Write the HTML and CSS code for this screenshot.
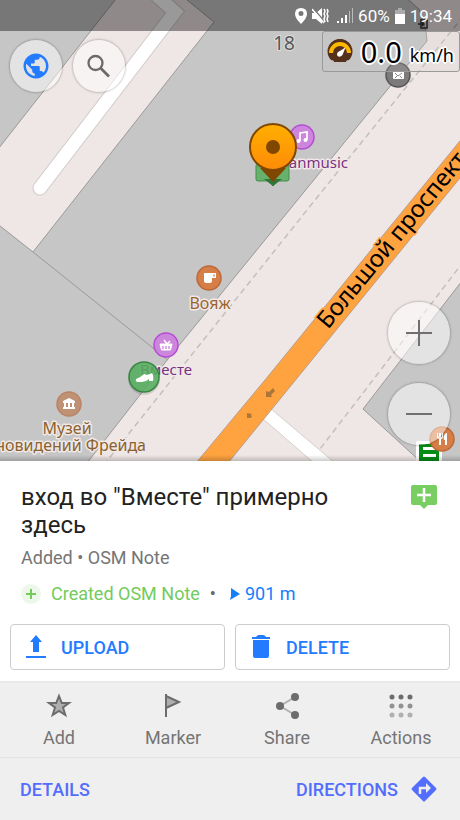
FILE: index.html
```html
<!DOCTYPE html>
<html lang="en">
<head>
<meta charset="utf-8">
<meta name="viewport" content="width=device-width, initial-scale=1">
<title>Map</title>
<link rel="stylesheet" href="styles.css">
</head>
<body>
<main class="app">
  <section class="map">
    <svg class="map-canvas" viewBox="0 0 460 461" preserveAspectRatio="xMinYMin slice" role="img" aria-label="Map">
      <rect class="land" width="460" height="461"/>
      <!-- buildings -->
      <g class="building">
        <path d="M-5-5H403L419 9L426 31L427 41L168 359L87 463H-5Z"/>
        <path d="M465 277L363 409L422 463H465Z"/>
        <path class="yard" d="M119-5L-5 153V222L33 252L214 22L181-5Z"/>
        <path d="M33 252L168 360"/>
      </g>
      <path class="path-edge" d="M470 8L315 200L107 461"/>
      <path class="path-edge" d="M470 253L373 380L320 449"/>
      <!-- service roads -->
      <path class="casing" d="M40 188L175 12L158-3"/>
      <path class="service" d="M40 188L175 12L158-3"/>
      <path class="side-road" d="M270 408L335 463H314L262 418Z"/>
      <!-- avenue -->
      <path class="avenue" d="M464 136V173L228 463H196L265 380Z"/>
      <g fill="#ac763a"><path d="M273 388l-4 4-3-1-0 6h6l-1-2 4-4z"/><path d="M247 413l5 1-1 1 1 2-2 1-3 0z"/><path d="M408 216l6 1-2 5z"/><path d="M340 301l4 2-3 3z"/></g>
      <text class="street" transform="translate(328 330) rotate(-50.6)">Большой проспект</text>
      <text class="house" x="284" y="50">18</text>

      <!-- transit sign -->
      <rect x="416" y="441" width="26" height="25" rx="2" fill="#fff"/>
      <path d="M419 444h20v20h-20z" fill="#078c17"/><path d="M423 447h13v3h-13zm0 7h13v3h-13z" fill="#fff"/>
      <path d="M421 20h6v8h-6z" fill="none" stroke="#333" stroke-width="1.5"/><path d="M418 24h6m-2-2 2 2-2 2" stroke="#333" fill="none" stroke-width="1.5"/>

      <g transform="translate(398 75)"><circle r="12" fill="#7c7a7b" stroke="#555" stroke-width="1.5"/><rect x="-5" y="-4" width="11" height="8" rx="1" fill="#fff"/><path d="M-3-2L0 1L4-2M-3 3L-1 1M4 3L2 1" fill="none" stroke="#888"/></g>
      <g transform="translate(302 137)"><circle class="shop" r="12"/><path d="M-2 4V-4L5-5V3" fill="none" stroke="#fff" stroke-width="1.7"/><circle cx="-3.500" cy="4" r="2" fill="#fff"/><circle cx="3.500" cy="3" r="2" fill="#fff"/></g>
      <text class="label shop-label" x="348" y="168" text-anchor="end">Romanmusic</text>
      <g transform="translate(209 278)"><circle class="food" r="12"/><path d="M-5-5H7V0H3V3Q3 5 1 5H-3Q-5 5-5 3Z" fill="#fff"/><path d="M5-3.500v2" stroke="#d37d45" stroke-width="1.3"/></g>
      <text class="label food-label" x="210" y="309">Вояж</text>
      <g transform="translate(166 345)"><circle class="shop" r="12"/><path d="M-6-1H6L4.500 5H-4.500Z" fill="#fff" stroke="#fff" stroke-linejoin="round"/><path d="M-2-5L1-1M4-4L1-1" stroke="#fff" stroke-width="1.500"/><path d="M-3 1v3M0 1v3M3 1v3" stroke="#c880da" stroke-width="1.3"/></g>
      <text class="label shop-label" x="166" y="375">Вместе</text>
      <g transform="translate(69 404)"><circle r="12" fill="#bf9275" stroke="#b98566" stroke-width="1.500"/><path d="M-6-3L0-6L6-3V-1H-6ZM-5-1h2v5h-2zM-1-1H1V4H-1zM3-1h2v5h-2zM-6 3H6V5H-6Z" fill="#fff"/></g>
      <text class="label museum-label" x="67" y="434">Музей</text>
      <text class="label museum-label" x="146" y="451" text-anchor="end">Сновидений Фрейда</text>
      <g transform="translate(442 439)"><circle class="food" r="12"/><path d="M-5-6V-2Q-5 0-3 0V6H-1V0Q1 0 1-2V-6H0V-2H-1V-6H-3V-2H-4V-6ZM4-6Q1-4 2 1H3V6H5V-6Z" fill="#fff"/></g>

      <circle cx="144" cy="379" r="16" fill="#000" opacity=".12"/>
      <circle cx="144" cy="377" r="15" fill="#56b05f" fill-opacity=".85" stroke="#398542" stroke-width="1.5"/>
      <path d="M136 379Q140 378 144 374Q148 376 152 373Q154 376 153 381H149V379Q146 382 142 382H137Q135 381 136 379Z" fill="#fff"/>
      <path d="M258 164h29q2 0 2 2v13q0 2-2 2h-9l-5 5-5-5h-10q-2 0-2-2v-13q0-2 2-2z" fill="#5daf63" fill-opacity=".92" stroke="#438d49"/>
      <path d="M264 179l9 7 9-7z" fill="#317539"/>
      <defs><linearGradient id="pin" x2="0" y2="1"><stop stop-color="#ffaf00"/><stop offset="1" stop-color="#ff8b08"/></linearGradient></defs>
      <path d="M260 168L273 182L286 168Z" fill="#804700"/>
      <circle cx="273" cy="147" r="23" fill="url(#pin)" stroke="#804700" stroke-width="2"/><circle cx="273" cy="147" r="7" fill="#804700"/>
    </svg>

    <header class="status">
      <svg width="12" height="16" viewBox="0 0 12 16"><path fill="#fff" fill-rule="evenodd" d="M6 0Q0 0 0 6Q0 10 6 16Q12 10 12 6Q12 0 6 0ZM6 3A2.500 2.500 0 1 1 6 8A2.500 2.500 0 0 1 6 3Z"/></svg>
      <svg width="17" height="16" viewBox="0 0 17 16" fill="none" stroke="#fff"><path d="M0 5h4l6-5v16l-6-5H0z" fill="#fff" stroke="none"/><path d="M1 0L13 14" stroke="#777" stroke-width="1.500"/><path d="M0 1L12 15" stroke-width="1.500"/><path d="M12 1l1 2-1 3 1 2-1 3 1 3M15 1l1 2-1 3 1 2-1 3 1 3" stroke-width="1.500"/></svg>
      <svg class="signal" width="16" height="16" viewBox="0 0 16 16" fill="#fff"><path d="M0 13h2v2H0zM4 10h2v5H4zM8 7h2v8H8z"/><path d="M12 3h1v12h-1zM15 0h1v15h-1z" opacity=".5"/></svg>
      <span>60%</span>
      <svg width="10" height="16" viewBox="0 0 10 16"><path d="M3 0h4v2h3v14H0V2h3z" fill="#ababab"/><path d="M0 6h10v10H0z" fill="#fff"/></svg>
      <time>19:34</time>
    </header>

    <div class="speed">
      <svg width="26" height="26" viewBox="0 0 26 26"><path d="M7 23Q7 21 4 21A12.500 12.500 0 1 1 22 21Q19 21 19 23Z" fill="#55301b"/><path d="M4 14A9 9 0 0 1 22 14" fill="none" stroke="#fdb900" stroke-width="4"/><path d="M18.500 8.500L15.500 16Q13 19 10.500 17Q9 14 12 12.500Z" fill="#fff"/></svg>
      <span class="speed-value">0.0</span><span class="speed-unit">km/h</span>
    </div>

    <div class="top-controls">
      <button class="round" type="button" aria-label="Configure map"><svg width="30" height="30" viewBox="0 0 24 24"><path fill="#237bff" d="M12 2C6.480 2 2 6.480 2 12s4.480 10 10 10 10-4.480 10-10S17.520 2 12 2zm-1 17.930c-3.950-.49-7-3.850-7-7.930 0-.62.080-1.210.21-1.790L9 15v1c0 1.100.9 2 2 2v1.930zm6.900-2.540c-.26-.81-1-1.390-1.900-1.390h-1v-3c0-.55-.45-1-1-1H8v-2h2c.55 0 1-.45 1-1V7h2c1.100 0 2-.9 2-2v-.41c2.930 1.190 5 4.060 5 7.410 0 2.080-.8 3.970-2.100 5.390z"/></svg></button>
      <button class="round" type="button" aria-label="Search"><svg width="30" height="30" viewBox="0 0 30 30" fill="none" stroke="#6b6b6b"><circle cx="11.500" cy="12" r="7" stroke-width="2.300"/><path d="M16.500 17L25 25.500" stroke-width="2.800"/></svg></button>
    </div>
    <div class="zoom-controls">
      <button class="round large" type="button" aria-label="Zoom in"><svg width="26" height="26" viewBox="0 0 26 26"><path d="M0 13H26M13 0V26" stroke="#707070" stroke-width="2"/></svg></button>
      <button class="round large" type="button" aria-label="Zoom out"><svg width="26" height="26" viewBox="0 0 26 26"><path d="M0 13H26" stroke="#707070" stroke-width="2"/></svg></button>
    </div>
  </section>

  <section class="sheet">
    <div class="heading">
      <h1>вход во "Вместе" примерно здесь</h1>
      <svg width="26" height="24" viewBox="0 0 26 24"><path d="M2 0H24Q26 0 26 2V18Q26 20 24 20H17L13 24L9 20H2Q0 20 0 18V2Q0 0 2 0Z" fill="#78ce60"/><path d="M6 10H20M13 3V17" stroke="#fff" stroke-width="2.500"/></svg>
    </div>
    <p class="subtitle">Added • OSM Note</p>
    <div class="info">
      <svg width="20" height="20" viewBox="0 0 20 20"><circle cx="10" cy="10" r="10" fill="#edf8ea"/><path d="M5 10H15M10 5V15" stroke="#73cb5c" stroke-width="2"/></svg>
      <span class="created">Created OSM Note</span>
      <span class="dot">•</span>
      <span class="distance"><svg width="10" height="12" viewBox="0 0 10 12"><path d="M1 0L10 6L0 12L1 8Z" fill="#147eff"/></svg>901 m</span>
    </div>
    <div class="buttons">
      <button type="button"><svg width="20" height="24" viewBox="0 0 20 24" fill="#237bff"><path d="M10 0L16 7H13V17H7V7H4ZM0 21H20V23H0Z"/></svg>UPLOAD</button>
      <button type="button"><svg width="20" height="24" viewBox="0 0 20 24" fill="#237bff"><path d="M1 2H5Q6 0 8 0H12Q14 0 15 2H19V4H1ZM2 5H18V21Q18 23 16 23H4Q2 23 2 21Z"/></svg>DELETE</button>
    </div>
  </section>

  <nav class="actions">
    <button type="button"><svg width="26" height="26" viewBox="0 0 26 26"><path d="M13 3L15.800 10H23L17 14.500L19.300 22L13 18L6.700 22L9 14.500L3 10H10.200Z" fill="#aeaeae" stroke="#6c6c6c" stroke-width="2"/></svg>Add</button>
    <button type="button"><svg width="26" height="26" viewBox="0 0 26 26"><path d="M6 3L19 9L6 15" fill="#aeaeae" stroke="#6c6c6c" stroke-width="2"/><path d="M6 1V24" stroke="#6c6c6c" stroke-width="2"/></svg>Marker</button>
    <button type="button"><svg width="26" height="26" viewBox="0 0 26 26"><path d="M21 4L6 13L21 22" fill="none" stroke="#b0b0b0" stroke-width="2"/><g fill="#6c6c6c"><circle cx="21" cy="4" r="4"/><circle cx="6" cy="13" r="4"/><circle cx="21" cy="22" r="4"/></g></svg>Share</button>
    <button type="button"><svg width="26" height="26" viewBox="0 0 26 26" stroke-width="5" stroke-linecap="round"><path d="M4 4h0M13 4h0M22 4h0" stroke="#6c6c6c"/><path d="M4 13h0M13 13h0M22 13h0" stroke="#929292"/><path d="M4 22h0M13 22h0M22 22h0" stroke="#b0b0b0"/></svg>Actions</button>
  </nav>
  <footer class="links">
    <button type="button">DETAILS</button>
    <button type="button">DIRECTIONS<svg width="26" height="26" viewBox="0 0 26 26"><path d="M12 1Q13 0 14 1L25 12Q26 13 25 14L14 25Q13 26 12 25L1 14Q0 13 1 12Z" fill="#536dfe"/><path d="M9 18V12H16" fill="none" stroke="#eee" stroke-width="2.500"/><path d="M15 7L20 12L15 17Z" fill="#eee"/></svg></button>
  </footer>
</main>
</body>
</html>
```
FILE: styles.css
```css
* { box-sizing: border-box; }
body { margin: 0; font-family: Roboto, "Noto Sans", sans-serif; color: #222; }
button { border: 0; padding: 0; background: none; font: inherit; color: inherit; cursor: pointer; }
svg { display: block; flex: none; }
.app { display: flex; flex-direction: column; min-height: 100vh; background: #fff; }

.map { position: relative; flex: 1; min-height: 440px; overflow: hidden; background: #efe7e5; }
.map::after { content: ""; position: absolute; inset: auto 0 0; height: 6px; background: linear-gradient(transparent, rgba(0, 0, 0, .2)); }
.map-canvas { position: absolute; inset: 0; width: 100%; height: 100%; font-family: "Noto Sans", sans-serif; }
.land { fill: #efe7e5; }
.building path { fill: #c6c6c6; stroke: #9b9999; stroke-width: 1; }
.building .yard { fill: #efe7e5; }
.path-edge { fill: none; stroke: #c3bfbe; stroke-width: 1.5; stroke-dasharray: 6 4; }
.casing, .service { fill: none; stroke-linecap: round; }
.casing { stroke: #d0caca; stroke-width: 15px; }
.service { stroke: #fff; stroke-width: 13px; }
.side-road { fill: #fff; stroke: #d5cfce; }
.avenue { fill: #ffa340; stroke: #b99c89; stroke-width: 1; }
.street { font-size: 24px; fill: #000; stroke: #ffa340; stroke-width: 3px; paint-order: stroke; }
.house { font-size: 19px; fill: #555; text-anchor: middle; stroke: #ddd; stroke-width: 2px; paint-order: stroke; }
.label { font-size: 16px; text-anchor: middle; stroke: #f0e9e7; stroke-width: 3px; paint-order: stroke; stroke-linejoin: round; }
.label[text-anchor="end"] { text-anchor: end; }
.shop-label { font-size: 15px; fill: #7b3181; }
.food-label { fill: #9b632f; }
.museum-label { fill: #8a622f; }
.shop { fill: #cc86dc; stroke: #b74bd5; stroke-width: 1.5; }
.food { fill: #d67e47; stroke: #bd6837; stroke-width: 1.5; }

.status { position: absolute; inset: 0 0 auto; height: 31px; padding: 0 8px; display: flex; align-items: center; justify-content: flex-end; gap: 5px; background: rgba(0, 0, 0, .4); color: #fff; font-size: 17px; }
.signal { margin-left: 3px; }
.speed { position: absolute; top: 31px; right: 0; height: 41px; padding: 0 5px 0 4px; display: flex; align-items: center; border: 1px solid #999; border-radius: 3px; background: rgba(198, 198, 198, .2); font-family: "Noto Sans", sans-serif; color: #000; text-shadow: 1px 1px #fff, -1px -1px #fff, 1px -1px #fff, -1px 1px #fff, 2px 0 #fff, -2px 0 #fff, 0 2px #fff, 0 -2px #fff; }
.speed-value { margin-left: 8px; font-size: 29px; line-height: 40px; }
.speed-unit { margin: 6px 0 0 8px; font-size: 18px; }

.top-controls, .zoom-controls { position: absolute; display: flex; }
.top-controls { top: 40px; left: 10px; gap: 11px; }
.zoom-controls { right: 10px; bottom: 16px; flex-direction: column; gap: 19px; }
.round { width: 52px; height: 52px; display: grid; place-items: center; border-radius: 50%; background: rgba(255, 255, 255, .5); box-shadow: 0 0 2px 1px rgba(0, 0, 0, .2); }
.large { width: 62px; height: 62px; }

.sheet { padding: 22px 10px 11px; }
.heading { display: flex; justify-content: space-between; align-items: flex-start; padding: 0 13px 0 11px; }
.heading svg { margin-top: 2px; }
h1 { max-width: 340px; margin: 0; font-size: 24px; line-height: 28px; font-weight: 400; }
.subtitle { margin: 7px 11px 12px; font-size: 18px; line-height: 24px; color: #757575; }
.info { display: flex; align-items: center; margin: 0 11px 18px; font-size: 18px; line-height: 24px; }
.created { margin-left: 10px; color: #73cb5c; }
.dot { margin: 0 14px 0 10px; color: #666; }
.distance { display: flex; align-items: center; gap: 5px; color: #147eff; }
.buttons { display: grid; grid-template-columns: 1fr 1fr; gap: 10px; }
.buttons button { display: flex; align-items: center; gap: 15px; height: 46px; padding: 0 15px; border: 1px solid #ccc; border-radius: 4px; color: #237bff; font-size: 18px; font-weight: 500; }

.actions { display: grid; grid-template-columns: repeat(4, 1fr); padding: 0 2px; height: 77px; background: #efefef; border-top: 2px solid #e9e9e9; border-bottom: 1px solid #e4e4e4; color: #757575; font-size: 18px; }
.actions button { display: flex; flex-direction: column; align-items: center; gap: 8px; padding-top: 10px; line-height: 22px; }
.links { display: flex; justify-content: space-between; align-items: center; height: 62px; padding: 0 23px 0 20px; background: #efefef; color: #536dfe; font-size: 18px; font-weight: 500; }
.links button { display: flex; align-items: center; gap: 13px; }
```
